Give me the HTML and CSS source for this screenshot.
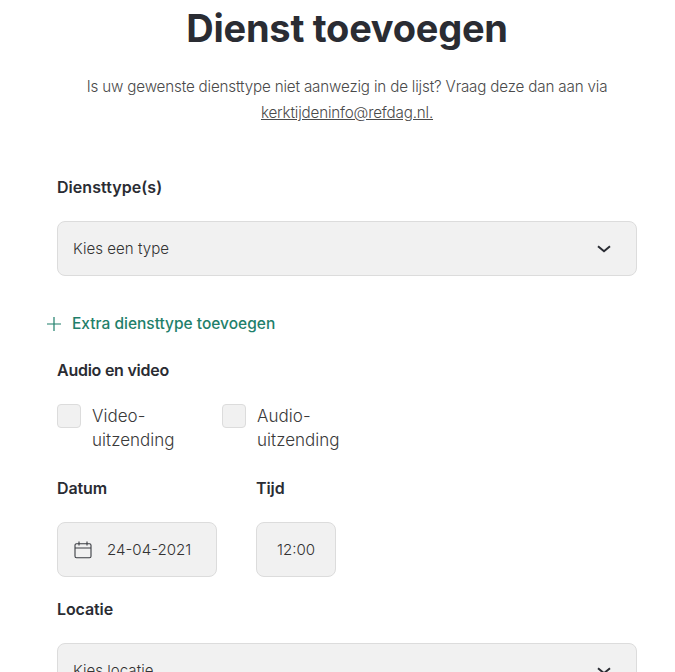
FILE: index.html
```html
<!DOCTYPE html>
<html lang="nl">
<head>
    <meta charset="UTF-8">
    <title>Dienst toevoegen</title>
    <link rel="stylesheet" href="styles.css">
</head>
<body>
    <main class="page">
        <h1>Dienst toevoegen</h1>
        <p class="intro">Is uw gewenste diensttype niet aanwezig in de lijst? Vraag deze dan aan via <a href="#">kerktijdeninfo@refdag.nl.</a></p>

        <form>
            <h2 class="label label-first">Diensttype(s)</h2>
            <div class="field select">
                <span>Kies een type</span>
                <svg class="chevron" width="14" height="8" viewBox="0 0 14 8"><path d="M1 1.2 7 6.2 13 1.2" fill="none" stroke="#2a2c33" stroke-width="2"/></svg>
            </div>

            <a class="add-link" href="#">
                <svg width="14" height="14" viewBox="0 0 14 14"><path d="M7 0V14M0 7H14" fill="none" stroke="#1f7f6b" stroke-width="1.2"/></svg>
                Extra diensttype toevoegen
            </a>

            <h2 class="label label-media">Audio en video</h2>
            <div class="checks">
                <label class="check"><span class="box"></span><span class="check-text">Video-<br>uitzending</span></label>
                <label class="check"><span class="box"></span><span class="check-text">Audio-<br>uitzending</span></label>
            </div>

            <div class="when">
                <div class="date-col">
                    <h2 class="label">Datum</h2>
                    <div class="field date">
                        <svg width="18" height="18" viewBox="0 0 18 18" fill="none" stroke="#3a3c42" stroke-width="1.1"><rect x="1" y="2.8" width="16" height="14" rx="1.5"/><path d="M1 7H17M5 .5V4.5M13 .5V4.5"/></svg>
                        <span>24-04-2021</span>
                    </div>
                </div>
                <div>
                    <h2 class="label">Tijd</h2>
                    <div class="field time">12:00</div>
                </div>
            </div>

            <h2 class="label label-place">Locatie</h2>
            <div class="field select">
                <span>Kies locatie</span>
                <svg class="chevron" width="14" height="8" viewBox="0 0 14 8"><path d="M1 1.2 7 6.2 13 1.2" fill="none" stroke="#2a2c33" stroke-width="2"/></svg>
            </div>
        </form>
    </main>
</body>
</html>
```

FILE: styles.css
```css
html, body { margin: 0; height: 672px; overflow: hidden; }
body { background: #fff; color: #2a2c33; font-family: "Inter", "Liberation Sans", sans-serif; }
.page { width: 580px; margin-left: 57px; }

h1 { margin: 0; padding-top: 5px; font-size: 38px; line-height: 46px; font-weight: 700; text-align: center; letter-spacing: -0.25px; }
.intro { width: 540px; margin: 23px auto 0; font-size: 15.2px; line-height: 26px; font-weight: 300; color: #4a4a4a; text-align: center; letter-spacing: -0.17px; }
.intro a { color: #4a4a4a; }

.label { margin: 0; font-size: 16px; line-height: 20px; font-weight: 600; letter-spacing: -0.1px; }
.label-first { margin-top: 51px; letter-spacing: 0.05px; }
.label-media { margin-top: 26px; letter-spacing: -0.25px; }
.label-place { margin-top: 22px; }

.field { box-sizing: border-box; height: 55px; margin-top: 24px; background: #f1f1f1; border: 1px solid #dcdcdc; border-radius: 8px; display: flex; align-items: center; font-size: 15.1px; font-weight: 300; color: #333; }
.select { justify-content: space-between; padding: 0 25px 0 15px; }
.date { width: 160px; padding-left: 16px; gap: 15px; }
.time { width: 80px; justify-content: center; }

.add-link { display: flex; align-items: center; gap: 11px; margin: 38px 0 0 -10px; font-size: 15.5px; line-height: 20px; font-weight: 500; color: #1f7f6b; text-decoration: none; }

.checks { display: flex; gap: 0; margin-top: 24px; }
.check { display: flex; gap: 11px; width: 165px; }
.box { box-sizing: border-box; width: 24px; height: 24px; background: #f1f1f1; border: 1px solid #dcdcdc; border-radius: 4px; }
.check-text { font-size: 17px; line-height: 24px; font-weight: 300; color: #3a3a3a; letter-spacing: 0.03px; }

.when { display: flex; margin-top: 26px; }
.date-col { width: 199px; }
```
